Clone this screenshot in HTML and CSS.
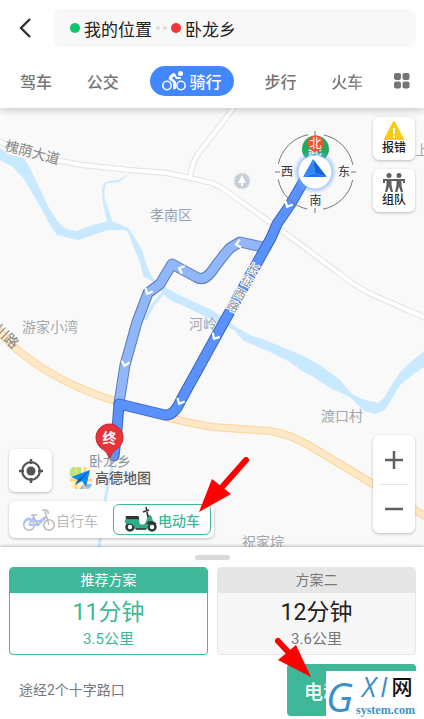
FILE: index.html
```
<!DOCTYPE html>
<html lang="zh-CN">
<head>
    <meta charset="utf-8" />
    <meta name="viewport" content="width=device-width, initial-scale=1" />
    <title>骑行</title>
    <link rel="stylesheet" href="styles.css">
</head>
<body>
    <header class="header">
        <div class="search-row">
            <button class="back" aria-label="返回">
                <svg width="12" height="20" viewBox="0 0 12 20"><path d="M11 1L2 10l9 9" fill="none" stroke="#333" stroke-width="2.4"/></svg>
            </button>
            <button class="search-box">
                <span class="dot green"></span>
                <span>我的位置</span>
                <span class="between"><i></i><i></i></span>
                <span class="dot red"></span>
                <span>卧龙乡</span>
            </button>
        </div>
        <nav class="tabs">
            <a href="#" class="tab">驾车</a>
            <a href="#" class="tab">公交</a>
            <a href="#" class="tab active">
                <svg width="24" height="20" viewBox="0 0 24 20" fill="none" stroke="#fff">
                    <circle cx="5" cy="14.500" r="4.200" stroke-width="1.500"/>
                    <circle cx="19" cy="14.500" r="4.200" stroke-width="1.500"/>
                    <circle cx="18.500" cy="2.600" r="2.500" fill="#fff" stroke="none"/>
                    <path d="M8 6L12 3l2.500 4H18" stroke-width="2" stroke-linejoin="round" stroke-linecap="round"/>
                    <path d="M11.500 3.500L8 7.500l4.500 3.500v6" stroke-width="2.800" stroke-linejoin="round" stroke-linecap="round"/>
                </svg>
                骑行
            </a>
            <a href="#" class="tab">步行</a>
            <a href="#" class="tab fade">火车</a>
            <button class="more" aria-label="更多">
                <svg width="16" height="16" viewBox="0 0 16 16" fill="#757575"><rect width="7" height="7" rx="2"/><rect x="8.500" width="7" height="7" rx="2"/><rect y="8.500" width="7" height="7" rx="2"/><rect x="8.500" y="8.500" width="7" height="7" rx="2"/></svg>
            </button>
        </nav>
    </header>

    <main class="map">
        <svg class="map-canvas" viewBox="0 108 424 439" preserveAspectRatio="xMidYMid slice">
            <defs>
                <path id="route-alt" d="M262 247L240 242L230 248Q222 257 212 271Q204 282 196 277L172 264L160 284L148 293L137 322L125 365L119 403"/>
                <path id="route-main" d="M309 172L290 205L277 224L271 238L224 322L181 400Q174 416 165 415L119 404L117 430L114 456"/>
                <path id="chevron" d="M-4 -2.500L0 2L4 -2.500" fill="none" stroke="#fff" stroke-width="2.200"/>
                <radialGradient id="glow"><stop offset=".7" stop-color="#5b9bff" stop-opacity=".7"/><stop offset="1" stop-color="#8abaff" stop-opacity="0"/></radialGradient>
            </defs>

            <!-- rivers -->
            <g fill="#c8e9ff">
                <path d="M0 148L10 155L24 158L31 170L39 187L49 208L58 222L66 229L76 231L90 226L108 221L114 222L128 228L135 238L142 250L146 264L152 277L160 284L175 293L190 300L212 310L236 327L250 335L262 339L280 346L303 356L320 365L340 380L352 394L362 399L378 403L384 398L391 386L401 371L412 361L424 351V367L415 373L400 385L393 397L385 410L375 414L364 411L350 397L330 388L312 376L302 371L290 362L270 352L244 341L234 330L212 320L200 314L184 306L174 302L165 296L152 281L143 276L140 262L134 248L128 232L126 230L108 230L96 234L78 240L57 235L50 225L40 206L24 179L13 167L0 160Z"/>
                <path d="M131 172L119 182L107 183Q103 188 105 200L113 223L108 223Q102 205 102 190Q103 182 108 181L119 180Z"/>
            </g>
            <path d="M163 293L153 305L145 320M112 466L106 495L99 548" fill="none" stroke="#c8e9ff" stroke-width="3"/>

            <!-- roads -->
            <g fill="none" stroke-linejoin="round">
                <g stroke="#e2e2e2" stroke-width="6">
                    <path id="road-a" d="M-4 140L10 146L56 160L82 165L130 170L167 173L190 178L212 183L222 188L260 215L300 244L340 274Q358 289 380 298L428 319"/>
                    <path id="road-b" d="M190 177Q192 163 198 154L226 118L236 104"/>
                </g>
                <g stroke="#fff" stroke-width="4">
                    <use href="#road-a"/>
                    <use href="#road-b"/>
                </g>
                <path d="M-4 327Q10 344 20 352Q60 384 115 401Q160 418 212 427L270 431Q290 434 310 446L373 484L428 518" stroke="#fbd59a" stroke-width="8"/>
                <path d="M-4 327Q10 344 20 352Q60 384 115 401Q160 418 212 427L270 431Q290 434 310 446L373 484L428 518" stroke="#ffe8c8" stroke-width="6"/>
            </g>

            <!-- place names -->
            <g class="place">
                <text x="150" y="220" class="district">孝南区</text>
                <text x="22" y="332">游家小湾</text>
                <text x="189" y="329">河岭</text>
                <text x="321" y="421">渡口村</text>
                <text x="242" y="547">祝家垸</text>
                <text x="415" y="155">上河</text>
            </g>
            <g class="road-name">
                <text transform="translate(4 150) rotate(15)">槐荫大道</text>
                <text transform="translate(-7 330) rotate(44)">川路</text>
            </g>
            <circle cx="242" cy="181" r="8" fill="#c7ced8" stroke="#e3e7ec"/>
            <path d="M242 175l4 8h-3v3h-2v-3h-3z" fill="#fff"/>

            <!-- routes -->
            <g fill="none" stroke-linejoin="round" stroke-linecap="round">
                <use href="#route-alt" stroke="#587bb8" stroke-width="11"/>
                <use href="#route-alt" stroke="#92b6fa" stroke-width="9"/>
                <use href="#route-main" stroke="#3767bd" stroke-width="11"/>
                <use href="#route-main" stroke="#5a91fd" stroke-width="9"/>
            </g>
            <use href="#chevron" transform="translate(288 205) rotate(25)"/>
            <use href="#chevron" transform="translate(238 244) rotate(80)"/>
            <use href="#chevron" transform="translate(181 269) rotate(110)"/>
            <use href="#chevron" transform="translate(148 292) rotate(25)"/>
            <use href="#chevron" transform="translate(125 364) rotate(12)"/>
            <use href="#chevron" transform="translate(215 337) rotate(30)"/>
            <use href="#chevron" transform="translate(180 402) rotate(25)"/>
            <g class="route-name">
                <text transform="translate(251 273) rotate(28)">长</text>
                <text transform="translate(245 285) rotate(28)">征</text>
                <text transform="translate(238 298) rotate(28)">西</text>
                <text transform="translate(231 310) rotate(28)">路</text>
            </g>

            <!-- start point and compass -->
            <circle cx="315.500" cy="149" r="13.500" fill="#20aa62"/>
            <text x="315" y="157" class="pin-text" text-anchor="middle">起</text>
            <circle cx="315.500" cy="172" r="38" fill="none" stroke="#777" stroke-dasharray="44 15.690" stroke-dashoffset="-8"/>
            <path d="M315 131v5M315 208v5M275 172h5M351 172h5" stroke="#777"/>
            <circle cx="315" cy="172" r="22" fill="url(#glow)"/>
            <circle cx="315" cy="172" r="16.500" fill="#fff"/>
            <path d="M313 159L303 177L315 173Z" fill="#2e87fc"/>
            <path d="M313 159L327 177L315 173Z" fill="#1563da"/>
            <path d="M303 177L315 173L327 177Z" fill="#1b73ef"/>
            <circle cx="315.500" cy="143.500" r="8" fill="#f25431"/>
            <g class="compass" text-anchor="middle">
                <text x="315.500" y="148" class="north">北</text>
                <text x="287" y="176">西</text>
                <text x="344" y="176">东</text>
                <text x="315.500" y="205">南</text>
            </g>

            <!-- end point -->
            <text x="89" y="466" class="end-name">卧龙乡</text>
            <path d="M109.500 458Q107 451 101 448A13.500 13.500 0 1 1 118 448Q112 451 109.500 458Z" fill="#e6343a" stroke="#c4262d"/>
            <text x="109.500" y="443" class="pin-text" text-anchor="middle">终</text>

            <!-- map provider -->
            <rect x="70" y="467" width="22" height="22" rx="5" fill="#fff3d4"/>
            <path d="M75 467h6v9h-11v-4q0-5 5-5z" fill="#b4e681"/>
            <path d="M84 484h8q-1 5-6 5h-7z" fill="#8fbcf8"/>
            <path d="M76 467v22M85 467v22M70 480h22" stroke="#ffd66b" stroke-width="2.500"/>
            <path d="M90 470L71 477L78 480L75 485L82 481L86 487Z" fill="#0a8bf4"/>
            <path d="M90 470L78 480L75 485L80 481Z" fill="#075ba8"/>
            <text x="95" y="483" class="provider">高德地图</text>
        </svg>

        <div class="map-tools">
            <button class="tool">
                <svg width="22" height="19" viewBox="0 0 22 19"><path d="M11 1L20 18H2Z" fill="#facb14" stroke="#facb14" stroke-width="2" stroke-linejoin="round"/><path d="M11 7v6M11 14.500v2" stroke="#fff" stroke-width="2"/></svg>
                报错
            </button>
            <button class="tool">
                <svg width="22" height="19" viewBox="0 0 22 19" fill="none" stroke="#606060" stroke-width="2">
                    <circle cx="6" cy="2.500" r="2.500" fill="#606060" stroke="none"/>
                    <circle cx="16" cy="2.500" r="2.500" fill="#606060" stroke="none"/>
                    <path d="M1 7h20M1 6v4M21 6v4"/>
                    <path d="M3.500 6h5v6l1.500 7H7.800L6 13.500L4.200 19H2l1.500-7zM13.500 6h5v6l1.500 7h-2.200L16 13.500L14.200 19H12l1.500-7z" fill="#606060" stroke="none"/>
                </svg>
                组队
            </button>
        </div>

        <div class="zoom">
            <button aria-label="放大"><svg width="18" height="18" viewBox="0 0 18 18"><path d="M0 9h18M9 0v18" stroke="#606060" stroke-width="2.500"/></svg></button>
            <button aria-label="缩小"><svg width="18" height="18" viewBox="0 0 18 18"><path d="M0 9h18" stroke="#606060" stroke-width="2.500"/></svg></button>
        </div>

        <div class="map-bottom">
            <button class="locate" aria-label="定位">
                <svg width="26" height="26" viewBox="0 0 26 26"><circle cx="13" cy="13" r="8.800" fill="none" stroke="#555" stroke-width="2.200"/><circle cx="13" cy="13" r="4.500" fill="#555"/><path d="M13 1v5M13 20v5M1 13h5M20 13h5" stroke="#555" stroke-width="2.500"/></svg>
            </button>
            <div class="vehicles">
                <button class="vehicle">
                    <svg width="32" height="24" viewBox="0 0 32 24" fill="none">
                        <circle cx="6" cy="17" r="5.200" stroke="#bcbcbc" stroke-width="1.600"/>
                        <circle cx="26" cy="17" r="5.200" stroke="#bcbcbc" stroke-width="1.600"/>
                        <path d="M6 17L10 10L15 17H6M15 17L23 9M10 10Q14 17 22 9M1 16Q2 9 8 11" stroke="#a9c6fb" stroke-width="2"/>
                        <path d="M26 17L22 3M19 2h4q3 1 2 4M8 7h6M10 7l5 11" stroke="#bcbcbc" stroke-width="1.500"/>
                    </svg>
                    自行车
                </button>
                <button class="vehicle selected">
                    <svg width="33" height="25" viewBox="0 0 33 25" fill="none">
                        <circle cx="6" cy="20" r="3.500" stroke="#333" stroke-width="2.500"/>
                        <circle cx="28" cy="20" r="3.500" stroke="#333" stroke-width="2.500"/>
                        <path d="M2 12H15Q14 18 18 18Q22 18 23 13L24 8L27 9L29 15Q24 16 23 22H11Q10 16 3 17Q0 16 2 12Z" fill="#2fae87" stroke="#287a64" stroke-width=".6"/>
                        <path d="M2 9H13Q16 9 15 12H3Q1 12 2 9Z" fill="#333"/>
                        <path d="M24 10L23 5M19 5L25 3M22 0l1 4M12 22h10" stroke="#333" stroke-width="1.600"/>
                        <path d="M23 17Q26 13 32 17" stroke="#333" stroke-width="2"/>
                    </svg>
                    电动车
                </button>
            </div>
        </div>

        <svg class="arrow arrow-vehicle" width="52" height="56" viewBox="0 0 52 56"><path d="M48 3L25 29" stroke="#fe0000" stroke-width="6" stroke-linecap="round"/><path d="M1 55L14 22L33 37Z" fill="#fe0000"/></svg>
    </main>

    <section class="panel">
        <div class="handle"></div>
        <div class="plans">
            <button class="plan chosen">
                <span class="plan-title">推荐方案</span>
                <span class="plan-time">11分钟</span>
                <span class="plan-distance">3.5公里</span>
            </button>
            <button class="plan">
                <span class="plan-title">方案二</span>
                <span class="plan-time">12分钟</span>
                <span class="plan-distance">3.6公里</span>
            </button>
        </div>
        <div class="panel-footer">
            <p class="note">途经2个十字路口</p>
            <button class="start">电动车导航</button>
            <div class="watermark">
                <span class="mark-g">G</span>
                <div class="mark-right">
                    <span class="mark-top"><em>X</em><em>I</em><b>网</b></span>
                    <span class="mark-domain">system.com</span>
                </div>
            </div>
            <svg class="arrow arrow-start" width="38" height="42" viewBox="0 0 38 42"><path d="M4 4L17 18" stroke="#fe0000" stroke-width="6" stroke-linecap="round"/><path d="M37 40L4 23L22 8Z" fill="#fe0000"/></svg>
        </div>
    </section>
</body>
</html>
```

FILE: styles.css
```
* {
    box-sizing: border-box;
}

body {
    margin: 0;
    min-height: 100vh;
    display: flex;
    flex-direction: column;
    background: #fff;
    color: #333;
    font-family: Roboto, "Noto Sans CJK SC", sans-serif;
}

button {
    margin: 0;
    padding: 0;
    border: 0;
    background: none;
    color: inherit;
    font: inherit;
    cursor: pointer;
}

svg {
    display: block;
    flex: none;
}

/* header */
.header {
    padding: 9px 8px 12px;
    position: relative;
    z-index: 1;
    background: #fff;
    box-shadow: 0 2px 8px rgba(0, 0, 0, 0.2);
}

.search-row {
    display: flex;
    align-items: center;
}

.back {
    width: 46px;
    height: 38px;
    padding-left: 11px;
}

.search-box {
    flex: 1;
    height: 38px;
    padding: 0 16px;
    display: flex;
    align-items: center;
    gap: 4px;
    border-radius: 8px;
    background: #f8f8f8;
    font-size: 17px;
    color: #222;
}

.dot {
    width: 10px;
    height: 10px;
    border-radius: 50%;
}

.green {
    background: #10c46c;
}

.red {
    background: #f03438;
}

.between {
    display: flex;
    gap: 3px;
}

.between i {
    width: 4px;
    height: 4px;
    border-radius: 50%;
    background: #dedede;
}

.tabs {
    margin-top: 19px;
    padding: 0 6px 0 8px;
    display: flex;
    align-items: center;
    justify-content: space-between;
}

.tab {
    height: 30px;
    padding: 0 4px;
    display: flex;
    align-items: center;
    font-size: 16px;
    font-weight: 500;
    color: #757575;
    text-decoration: none;
}

.tab.active {
    padding: 0 12px;
    gap: 4px;
    border-radius: 15px;
    background: #4287ff;
    color: #fff;
}

.fade {
    background: linear-gradient(90deg, #757575 60%, #b5b5b5);
    background-clip: text;
    color: transparent;
}

/* map */
.map {
    flex: 1;
    min-height: 438px;
    position: relative;
    overflow: hidden;
    background: #f9f9f9;
}

.map-canvas {
    position: absolute;
    width: 100%;
    height: 100%;
}

.place {
    font-size: 14px;
    fill: #a3a7ab;
}

.district {
    fill: #94a3b3;
}

.road-name {
    font-size: 14px;
    fill: #858585;
}

.route-name {
    font-size: 12px;
    fill: #8d9096;
    stroke: #fff;
    stroke-width: 2px;
    paint-order: stroke;
    text-anchor: middle;
}

.compass {
    font-size: 12px;
    fill: #333;
}

.north {
    fill: #fff;
}

.pin-text {
    font-size: 14px;
    font-weight: bold;
    fill: #fff;
}

.end-name {
    font-size: 14px;
    fill: #8f9397;
}

.provider {
    font-size: 14px;
    font-weight: 500;
    fill: #5c5c5c;
}

.map-tools {
    position: absolute;
    top: 9px;
    right: 9px;
    display: grid;
    gap: 9px;
}

.tool,
.zoom,
.locate,
.vehicles {
    border-radius: 6px;
    background: #fff;
    box-shadow: 0 1px 3px rgba(0, 0, 0, 0.25);
}

.tool {
    width: 42px;
    height: 43px;
    display: flex;
    flex-direction: column;
    align-items: center;
    justify-content: center;
    font-size: 12px;
    line-height: 16px;
    font-weight: 500;
    color: #222;
}

.zoom {
    position: absolute;
    right: 9px;
    bottom: 14px;
    width: 42px;
    padding: 0 6px;
}

.zoom button {
    width: 100%;
    height: 49px;
    display: grid;
    place-items: center;
}

.zoom button + button {
    border-top: 1px solid #e6e6e6;
}

.map-bottom {
    position: absolute;
    left: 9px;
    bottom: 9px;
    display: grid;
    gap: 9px;
}

.locate {
    width: 43px;
    height: 43px;
    display: grid;
    place-items: center;
}

.vehicles {
    padding: 3px;
    display: flex;
    gap: 4px;
}

.vehicle {
    height: 31px;
    padding: 0 10px;
    display: flex;
    align-items: center;
    gap: 1px;
    border: 1px solid transparent;
    border-radius: 6px;
    font-size: 14px;
    color: #b8b8b8;
}

.vehicle.selected {
    border-color: #3fb798;
    color: #3fb798;
    font-weight: 500;
}

.arrow {
    position: absolute;
    pointer-events: none;
}

.arrow-vehicle {
    left: 198px;
    bottom: 34px;
}

/* bottom panel */
.panel {
    padding: 8px 8px 3px 9px;
    position: relative;
    background: #fff;
    box-shadow: 0 -1px 3px rgba(0, 0, 0, 0.25);
}

.handle {
    width: 35px;
    height: 5px;
    margin: 0 auto 7px;
    border-radius: 3px;
    background: #d9d9d9;
}

.plans {
    display: grid;
    grid-template-columns: 1fr 1fr;
    gap: 9px;
}

.plan {
    height: 88px;
    display: flex;
    flex-direction: column;
    overflow: hidden;
    border: 1px solid #e6e6e6;
    border-radius: 4px;
    background: #f7f7f7;
    color: #777;
}

.plan span {
    width: 100%;
    text-align: center;
}

.plan-title {
    font-size: 14px;
    line-height: 25px;
    background: #e6e6e6;
}

.plan-time {
    padding-top: 4px;
    font-size: 23px;
    line-height: 32px;
    color: #222;
}

.plan-distance {
    font-size: 15px;
    line-height: 20px;
}

.plan.chosen {
    border-color: #3fb798;
    background: #fff;
    color: #3fb798;
}

.chosen .plan-title {
    background: #3fb798;
    color: #fff;
}

.chosen .plan-time {
    color: #3fb798;
}

.panel-footer {
    margin-top: 9px;
    padding-left: 10px;
    position: relative;
    display: flex;
    align-items: center;
    justify-content: space-between;
}

.note {
    margin: 0;
    padding-bottom: 3px;
    font-size: 14px;
    color: #777;
}

.start {
    width: 129px;
    height: 52px;
    border-radius: 4px;
    background: #3fb798;
    color: #fff;
    font-size: 19px;
    font-weight: 500;
}

.watermark {
    position: absolute;
    right: -8px;
    bottom: -3px;
    width: 98px;
    height: 48px;
    display: flex;
    gap: 1px;
    background: #fff;
    color: #3d8fcb;
}

.mark-g {
    width: 29px;
    font: italic 40px/52px "Open Sans", sans-serif;
    font-weight: 500;
}

.mark-right {
    display: flex;
    flex-direction: column;
}

.mark-top {
    height: 32px;
    padding-left: 6px;
    display: flex;
    align-items: center;
    gap: 4px;
}

.mark-top em {
    font: italic 27px/32px "Open Sans", sans-serif;
}

.mark-top b {
    font-size: 21px;
    line-height: 32px;
    font-weight: 500;
    color: #111;
}

.mark-domain {
    font: bold 12px/14px "Liberation Serif", serif;
}

.arrow-start {
    right: 104px;
    top: -27px;
}
```
